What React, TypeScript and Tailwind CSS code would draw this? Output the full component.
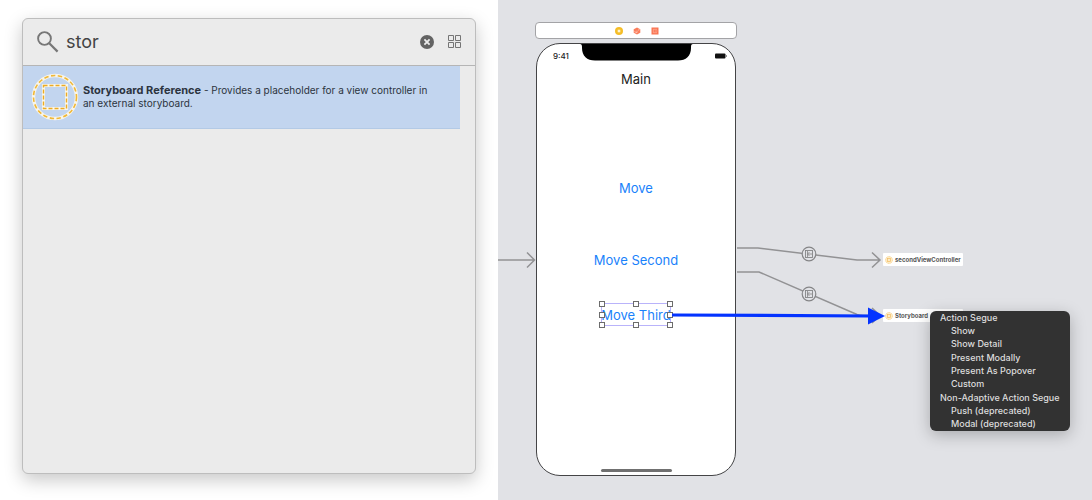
import type { ReactNode } from "react";

function SearchIcon() {
  return (
    <svg className="size-6 shrink-0 text-[#777777]" viewBox="0 0 24 24" fill="none" stroke="currentColor" aria-hidden="true">
      <circle cx="8.500" cy="8.500" r="6.400" strokeWidth="1.900" />
      <path d="M13 13 21.600 21.600" strokeWidth="2.200" />
    </svg>
  );
}

function ClearIcon() {
  return (
    <svg className="size-3.5" viewBox="0 0 14 14" aria-hidden="true">
      <circle cx="7" cy="7" r="7" fill="#636363" />
      <path d="M4.4 4.4l5.2 5.2M9.6 4.4l-5.2 5.2" stroke="#ececec" strokeWidth="1.8" />
    </svg>
  );
}

function GridIcon() {
  return (
    <svg className="size-3.5" viewBox="0 0 14 14" fill="none" stroke="#757575" aria-hidden="true">
      <path d="M.5 .5h5v5h-5zM7.5 .5h5v5h-5zM.5 7.5h5v5h-5zM7.5 7.5h5v5h-5z" />
    </svg>
  );
}

function ReferenceIcon() {
  return (
    <svg className="size-12 shrink-0" viewBox="0 0 48 48" fill="none" aria-hidden="true">
      <circle cx="24" cy="24" r="21.500" stroke="#f7f5ec" strokeWidth="3.400" />
      <circle cx="24" cy="24" r="21.500" stroke="#f0b838" strokeWidth="1.6" strokeDasharray="4.4 2.5" />
      <rect x="12.5" y="12.5" width="23" height="23" stroke="#f7f5ec" strokeWidth="3" />
      <rect x="12.5" y="12.5" width="23" height="23" stroke="#ecab25" strokeWidth="1.4" strokeDasharray="4 2" />
    </svg>
  );
}

function Library() {
  return (
    <section
      aria-label="Object library"
      className="flex w-[498px] shrink-0 flex-col bg-white pt-[18px] pr-[22px] pb-[26px] pl-[22px]"
    >
      <div className="flex flex-1 flex-col overflow-hidden rounded-md border border-[#bdbdbd] bg-[#ebebeb] shadow-[0_6px_18px_rgba(0,0,0,0.22)]">
        <div className="flex h-[47px] shrink-0 items-center border-b border-[#b5b5b5] pr-[13px] pl-[13px]">
          <SearchIcon />
          <input
            type="text"
            aria-label="Search objects"
            defaultValue="stor"
            className="ml-1.5 min-w-0 flex-1 bg-transparent text-lg leading-6 text-[#444444] outline-none"
          />
          <button type="button" aria-label="Clear search" className="mr-3.5">
            <ClearIcon />
          </button>
          <button type="button" aria-label="Grid view">
            <GridIcon />
          </button>
        </div>
        <button
          type="button"
          className="mr-[15px] flex h-[63px] items-center gap-1 border-b border-[#b3cae6] bg-[#c2d5ef] pl-2 text-left"
        >
          <ReferenceIcon />
          <p className="pr-5 text-[10px] leading-[13px] text-[#2c3440]">
            <strong className="text-[11px] font-bold">Storyboard Reference</strong> - Provides a placeholder for a view controller in
            <br />
            an external storyboard.
          </p>
        </button>
      </div>
    </section>
  );
}

function SceneDock() {
  return (
    <div className="flex h-[17px] items-center justify-center gap-2.5 rounded-sm border border-[#a3a3a6] bg-white pl-0.5">
      <svg className="size-2" viewBox="0 0 8 8" aria-hidden="true">
        <circle cx="4" cy="4" r="4" fill="#f5bd27" />
        <rect x="2.7" y="2.7" width="2.6" height="2.6" fill="#fff4cf" />
      </svg>
      <svg className="size-2" viewBox="0 0 8 8" aria-hidden="true">
        <path d="M4 .4 7.300 2.200v3.600L4 7.600 .7 5.800V2.200z" fill="#fa7d5b" />
        <path d="M1.4 4.6 4 5.8V3.6M5 3.2l1.6-.6" stroke="#ffd6c9" strokeWidth=".7" fill="none" />
      </svg>
      <svg className="size-2" viewBox="0 0 8 8" aria-hidden="true">
        <rect x=".5" y=".5" width="7" height="7" fill="#fa7452" />
        <path d="M6 2.3H2.3v3.4H6M3.6 4h2.8" stroke="#ffcdbd" strokeWidth=".5" fill="none" />
      </svg>
    </div>
  );
}

const handles = [
  "-top-[3px] -left-[3px]",
  "-top-[3px] left-[calc(50%-3px)]",
  "-top-[3px] -right-[3px]",
  "top-[calc(50%-3px)] -left-[3px]",
  "top-[calc(50%-3px)] -right-[3px]",
  "-bottom-[3px] -left-[3px]",
  "-bottom-[3px] left-[calc(50%-3px)]",
  "-bottom-[3px] -right-[3px]",
];

function PhoneButton({ children }: { children: ReactNode }) {
  return (
    <button type="button" className="text-[13px] leading-5 text-[#1a82fb]">
      {children}
    </button>
  );
}

function Scene() {
  return (
    <div className="absolute top-[22px] left-[37px] flex w-[202px] flex-col gap-1">
      <SceneDock />
      <div className="relative mx-px flex h-[433px] flex-col items-center rounded-[24px] border border-[#444446] bg-white">
        <svg className="absolute top-0 left-[43px] h-[17px] w-[114px]" viewBox="0 0 114 17" aria-hidden="true">
          <path d="M0 0h113c-1.500 0-2 1-2 3v1c0 8-5 12.500-13 12.500H15C7 16.500 2 12 2 4V3C2 1 1.500 0 0 0z" fill="#000" />
        </svg>
        <div className="flex w-full items-center justify-between pt-2 pr-2 pl-4">
          <span className="text-[8px] leading-2 font-medium text-[#222222]">9:41</span>
          <svg className="h-1.5 w-3" viewBox="0 0 12 6" aria-hidden="true">
            <rect x="0" y=".5" width="10.500" height="5" rx="1" fill="#111" />
            <path d="M11.400 2v2" stroke="#888" />
          </svg>
        </div>
        <h1 className="mt-[9px] text-[13px] leading-5 text-[#222222]">Main</h1>
        <div className="mt-[89px] flex flex-col items-center">
          <PhoneButton>Move</PhoneButton>
          <div className="mt-[49px]">
            <PhoneButton>Move Second</PhoneButton>
          </div>
          <div className="relative mt-8 flex h-[23px] w-[70px] items-center justify-center border border-[#b9b3fa] whitespace-nowrap">
            <PhoneButton>Move Third</PhoneButton>
            {handles.map((place) => (
              <span key={place} className={`absolute size-[6px] border border-[#6c6c6c] bg-white ${place}`} />
            ))}
          </div>
        </div>
        <div className="mt-auto mb-[3px] h-[3px] w-[71px] rounded-full bg-[#707070]" />
      </div>
    </div>
  );
}

function SegueBadge({ x, y }: { x: number; y: number }) {
  return (
    <g transform={`translate(${x} ${y})`} fill="none" stroke="#858587">
      <circle r="6.800" fill="#e1e2e6" strokeWidth="1.200" />
      <rect x="-3.500" y="-3.500" width="7" height="7" strokeWidth=".9" />
      <path d="M3 0H-1.500M.5-2-1.500 0 .5 2M-1.500-3v6" strokeWidth=".8" />
    </g>
  );
}

function Connections() {
  return (
    <svg className="pointer-events-none absolute top-0 left-0 h-[500px] w-[594px]" viewBox="0 0 594 500" fill="none" aria-hidden="true">
      <g stroke="#929294" strokeWidth="1.500">
        <path d="M0 260h36M29 252.500l7.500 7.500-7.500 7.500" />
        <path d="M239 248h21l99 12h22M374 252.500l8 7.500-8 7.500" />
        <path d="M239 272h22l98 42.500q3 1 6 1h16M374 308l8 7.500-8 7.500" />
      </g>
      <SegueBadge x={311} y={254} />
      <SegueBadge x={311} y={294} />
      <path d="M174 315l198 1" stroke="#0433ff" strokeWidth="3.200" />
      <path d="M370 307.500v17l17-8.500z" fill="#0433ff" />
    </svg>
  );
}

function ReferenceNode({ label, place }: { label: string; place: string }) {
  return (
    <div className={`absolute flex h-[13px] w-20 items-center gap-0.5 rounded-[1px] bg-white pl-0.5 whitespace-nowrap ${place}`}>
      <svg className="size-2 shrink-0" viewBox="0 0 8 8" fill="none" aria-hidden="true">
        <circle cx="4" cy="4" r="3.500" fill="#fdecc8" stroke="#f8d797" strokeDasharray="1.200 .6" />
        <rect x="2.400" y="2.400" width="3.200" height="3.200" stroke="#f3bd62" strokeWidth=".7" />
      </svg>
      <span className="text-[6px] leading-3 font-bold text-[#555555]">{label}</span>
    </div>
  );
}

const segueGroups = [
  { title: "Action Segue", items: ["Show", "Show Detail", "Present Modally", "Present As Popover", "Custom"] },
  { title: "Non-Adaptive Action Segue", items: ["Push (deprecated)", "Modal (deprecated)"] },
];

function SegueMenu() {
  return (
    <div
      role="menu"
      className="absolute top-[311px] left-[432px] grid h-[120px] w-[140px] auto-rows-fr rounded-md bg-[#323232] text-[9px] leading-3 font-medium whitespace-nowrap text-[#dddddd] shadow-[0_4px_16px_rgba(0,0,0,0.25)]"
    >
      {segueGroups.map((group) => (
        <div key={group.title} role="group" aria-label={group.title} className="contents">
          <div className="flex items-center pl-2.5">{group.title}</div>
          {group.items.map((item) => (
            <button key={item} type="button" role="menuitem" className="flex items-center pl-[21px] text-left">
              {item}
            </button>
          ))}
        </div>
      ))}
    </div>
  );
}

export default function App() {
  return (
    <main className="flex min-h-screen font-[Inter,sans-serif]">
      <Library />
      <section aria-label="Storyboard canvas" className="relative min-w-0 flex-1 overflow-hidden bg-[#e1e2e6]">
        <Scene />
        <ReferenceNode label="secondViewController" place="top-[253px] left-[385px]" />
        <ReferenceNode label="Storyboard" place="top-[309px] left-[385px]" />
        <Connections />
        <SegueMenu />
      </section>
    </main>
  );
}
